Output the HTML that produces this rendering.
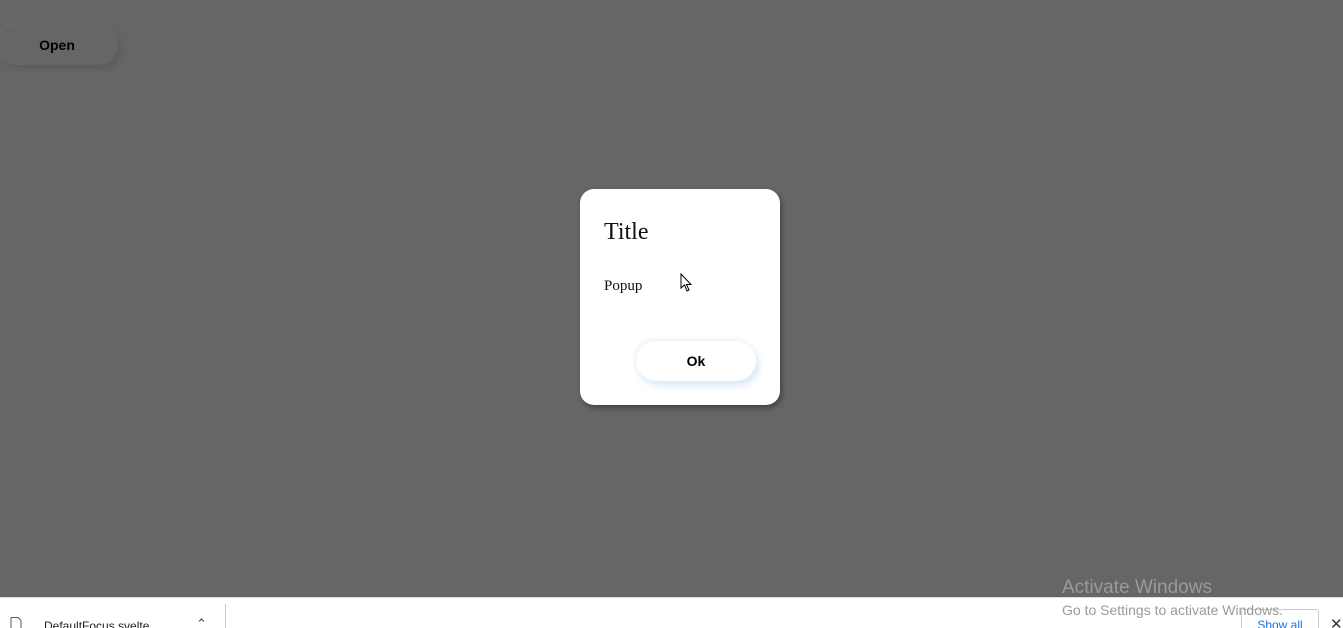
<!DOCTYPE html>
<html><head><style>
html,body{margin:0;padding:0;width:1343px;height:628px;overflow:hidden;background:#666;font-family:"Liberation Sans",sans-serif;position:relative}
.open{position:absolute;left:-4px;top:25px;width:122px;height:40px;border-radius:20px;background:#666;box-shadow:4px 4px 6px #5a5d62, -1px -1px 2px #6e6e6e;font-weight:bold;font-size:14px;line-height:40px;text-align:center;color:#000}
.dlg{position:absolute;left:580px;top:189px;width:200px;height:216px;background:#fff;border-radius:14px;box-shadow:2px 3px 6px rgba(0,0,0,.35)}
.t{position:absolute;left:24px;top:30px;font-family:"Liberation Serif",serif;font-size:24px;color:#111}
.p{position:absolute;left:24px;top:89px;font-family:"Liberation Serif",serif;font-size:15px;color:#111}
.ok{position:absolute;left:56px;top:152px;width:120px;height:40px;border-radius:20px;background:#fff;box-shadow:3px 4px 8px #d6e6f6,-2px -2px 5px #eef5fb;font-weight:bold;font-size:14px;line-height:40px;text-align:center;color:#000}
.bar{position:absolute;left:0;top:597px;width:1343px;height:31px;background:#fff;border-top:1px solid #ddd}
.aw{position:absolute;left:1062px;top:577px;color:#9a9a9a;font-size:19px}
.aw2{position:absolute;left:1062px;top:602px;color:#9a9a9a;font-size:14px}
</style></head><body>
<div class="open">Open</div>
<div class="dlg"><div class="t">Title</div><div class="p">Popup</div><div class="ok">Ok</div>
<svg style="position:absolute;left:100px;top:84px" width="14" height="20" viewBox="0 0 14 20"><path d="M1 1 L1 15 L4.5 12 L7 18 L9 17 L6.5 11.5 L11 11.5 Z" fill="#fff" stroke="#000" stroke-width="1"/></svg></div>
<div class="bar">
<svg style="position:absolute;left:10px;top:19px" width="12" height="12"><path d="M1 0.5 H8 L11 3.5 V12" fill="none" stroke="#555"/><path d="M1 0.5 V12" stroke="#555"/></svg>
<div style="position:absolute;left:44px;top:21px;font-size:12px;color:#222">DefaultFocus.svelte</div>
<div style="position:absolute;left:196px;top:18px;font-size:13px;color:#444">&#8963;</div>
<div style="position:absolute;left:225px;top:6px;width:1px;height:25px;background:#ccc"></div>
<div style="position:absolute;left:1241px;top:11px;width:76px;height:24px;border:1px solid #ccc;border-radius:3px;font-size:12px;color:#1a73e8;text-align:center;line-height:30px">Show all</div>
<div style="position:absolute;left:1330px;top:17px;font-size:15px;color:#333">✕</div>
</div>
<div class="aw">Activate Windows</div>
<div class="aw2">Go to Settings to activate Windows.</div>
</body></html>
